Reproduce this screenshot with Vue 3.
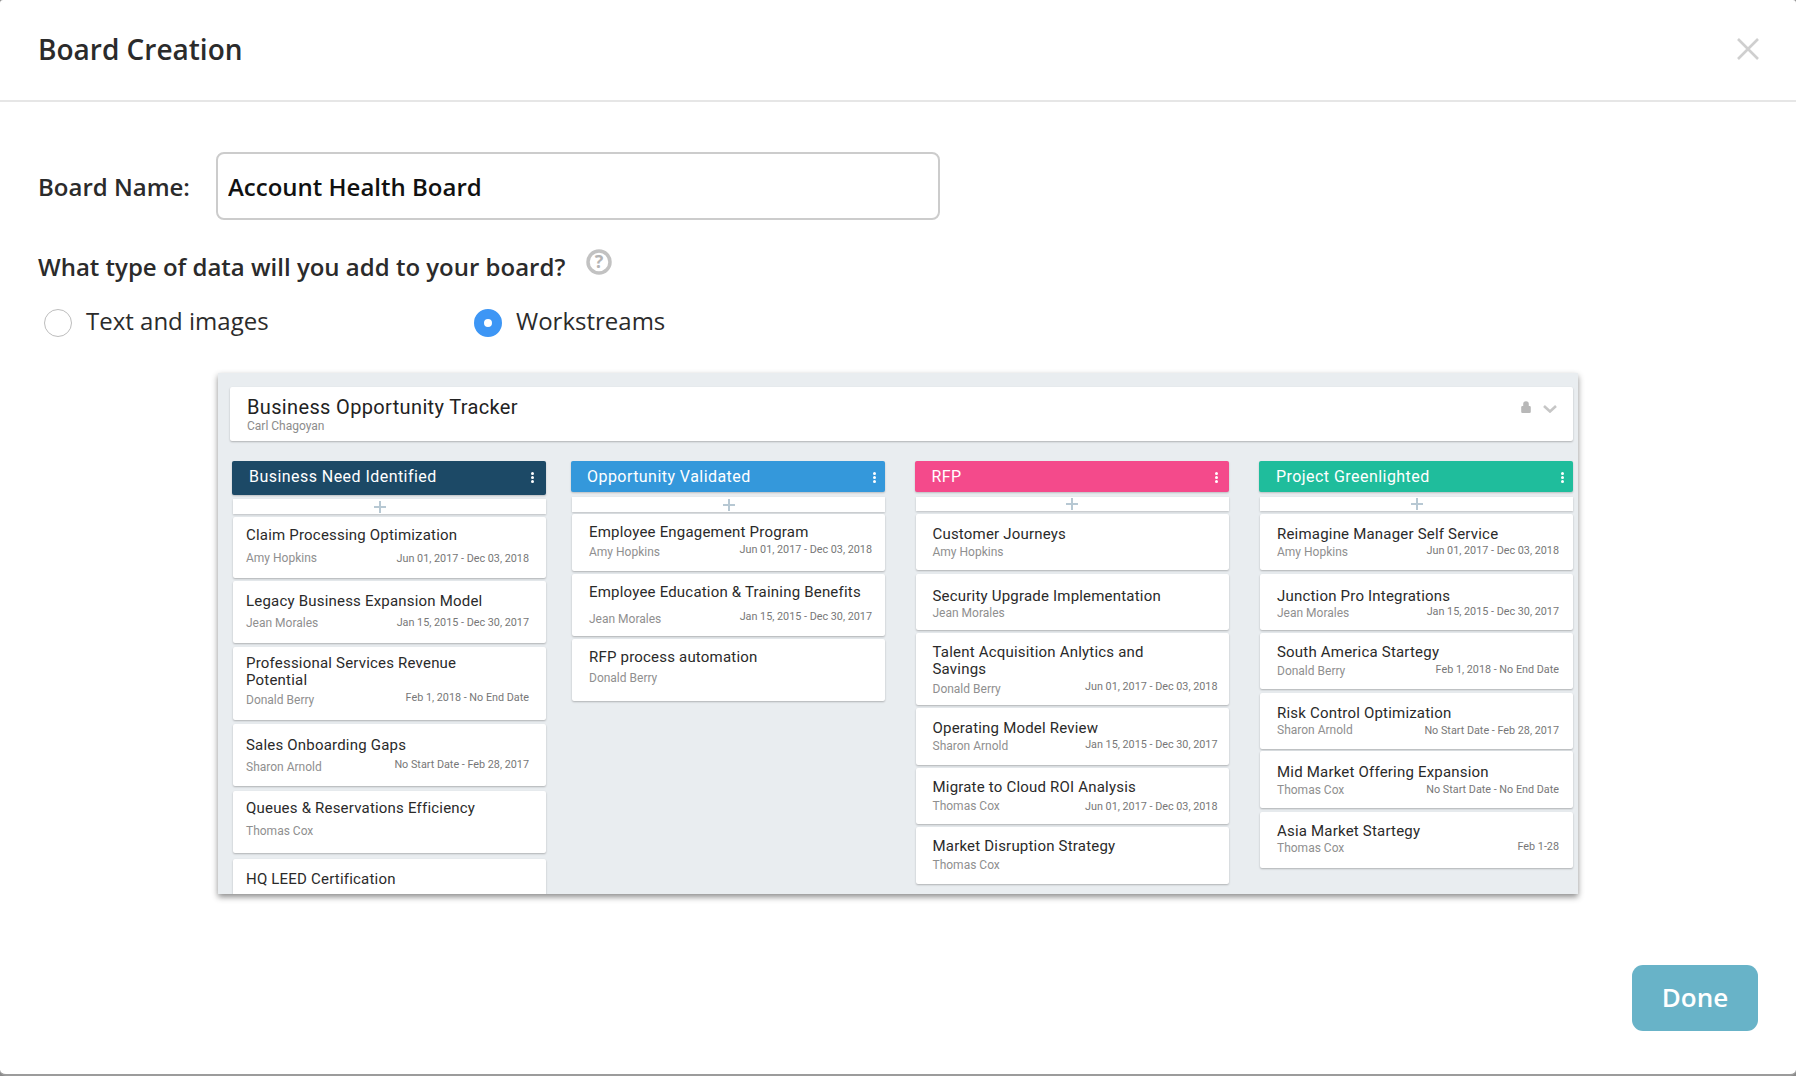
<template>
  <div class="modal">
    <header class="modal-head">
      <h1>Board Creation</h1>
      <svg class="close" width="24" height="24" viewBox="0 0 24 24">
        <path d="M2 2 L22 22 M22 2 L2 22" stroke="#cfcfcf" stroke-width="2.6" fill="none" />
      </svg>
    </header>

    <section class="form">
      <div class="name-row">
        <label for="board-name">Board Name:</label>
        <input id="board-name" type="text" value="Account Health Board" />
      </div>
      <div class="question">
        <span>What type of data will you add to your board?</span>
        <svg class="help" width="26" height="26" viewBox="0 0 26 26">
          <circle cx="13" cy="13" r="11" fill="#fff" stroke="#c2c2c2" stroke-width="3.5" />
          <text x="13" y="19" text-anchor="middle" class="help-q">?</text>
        </svg>
      </div>
      <div class="radios">
        <div class="radio-item first">
          <span class="radio"></span>
          <span>Text and images</span>
        </div>
        <div class="radio-item">
          <span class="radio on"></span>
          <span>Workstreams</span>
        </div>
      </div>
    </section>

    <div class="preview-wrap">
      <div class="preview">
        <div class="board-head">
          <div>
            <div class="board-title">Business Opportunity Tracker</div>
            <div class="board-owner">Carl Chagoyan</div>
          </div>
          <div class="board-icons">
            <svg width="10" height="12" viewBox="0 0 10 12">
              <path d="M2.2 5 V3 a2.8 2.8 0 0 1 5.6 0 V5 H8.6 a1.2 1.2 0 0 1 1.2 1.2 V10.8 a1.2 1.2 0 0 1 -1.2 1.2 H1.4 a1.2 1.2 0 0 1 -1.2 -1.2 V6.2 a1.2 1.2 0 0 1 1.2 -1.2 Z" fill="#b8b8b8" />
            </svg>
            <svg class="chevron" width="14" height="8" viewBox="0 0 14 8">
              <path d="M1 1 L7 6.5 L13 1" stroke="#c6c6c6" stroke-width="2.6" fill="none" />
            </svg>
          </div>
        </div>

        <div class="columns">
          <div v-for="col in columns" :key="col.name" class="column">
            <div class="col-head" :style="{ background: col.color, height: col.headH + 'px', paddingLeft: col.textX + 'px' }">
              <span>{{ col.name }}</span>
              <i class="dots" :style="{ right: col.dotsR + 'px' }"><b></b><b></b><b></b></i>
            </div>
            <div class="add" :style="{ marginTop: col.addGap + 'px', height: col.addH + 'px' }">
              <svg :style="{ marginLeft: col.plusShift + 'px' }" width="12" height="12" viewBox="0 0 12 12">
                <path d="M6 0 V12 M0 6 H12" stroke="#b7c8d3" stroke-width="2" />
              </svg>
            </div>
            <div
              v-for="card in col.cards"
              :key="card.key"
              class="card"
              :style="{ marginTop: card.gap + 'px', height: card.h + 'px', paddingTop: card.pt + 'px', paddingLeft: col.cardX + 'px', paddingRight: col.cardR + 'px' }"
            >
              <div v-for="line in card.lines" :key="line" class="card-title">{{ line }}</div>
              <div class="meta" :style="{ marginTop: card.mt + 'px' }">
                <span class="owner">{{ card.owner }}</span>
                <span v-if="card.date" class="date" :style="{ marginTop: card.dt + 'px' }">{{ card.date }}</span>
              </div>
            </div>
          </div>
        </div>
      </div>
    </div>

    <div class="foot">
      <button type="button" class="done">Done</button>
    </div>
  </div>
</template>

<script setup>
const TITLE_LH = 17
const META_LH = 14

// y positions are measured on the board picture: top, bottom, title centre, owner centre, date centre
function makeCards(addBottom, rows) {
  let prev = addBottom
  return rows.map((r) => {
    const [title, owner, date, top, bottom, titleY, ownerY, dateY] = r
    const lines = Array.isArray(title) ? title : [title]
    const card = {
      key: lines[0],
      lines,
      owner,
      date,
      gap: top - prev,
      h: bottom - top,
      pt: titleY - top - TITLE_LH / 2,
      mt: ownerY - (titleY + (lines.length - 1) * TITLE_LH) - TITLE_LH / 2 - META_LH / 2,
      dt: dateY ? dateY - ownerY : 0
    }
    prev = bottom
    return card
  })
}

const JUN = 'Jun 01, 2017 - Dec 03, 2018'
const JAN = 'Jan 15, 2015 - Dec 30, 2017'
const FEB = 'Feb 1, 2018 - No End Date'
const NOS = 'No Start Date - Feb 28, 2017'

const columns = [
  {
    name: 'Business Need Identified',
    color: '#1c4966',
    headH: 34,
    textX: 17,
    dotsR: 12,
    addGap: 4,
    addH: 15,
    plusShift: -20,
    cardX: 13,
    cardR: 17,
    cards: makeCards(514, [
      ['Claim Processing Optimization', 'Amy Hopkins', JUN, 517, 578, 535, 558, 559],
      ['Legacy Business Expansion Model', 'Jean Morales', JAN, 581, 643, 601, 623, 623],
      [['Professional Services Revenue', 'Potential'], 'Donald Berry', FEB, 647, 720, 663, 700, 698],
      ['Sales Onboarding Gaps', 'Sharon Arnold', NOS, 724, 786, 745, 767, 765],
      ['Queues & Reservations Efficiency', 'Thomas Cox', '', 791, 853, 808, 831, 0],
      ['HQ LEED Certification', '', '', 859, 920, 879, 900, 0]
    ])
  },
  {
    name: 'Opportunity Validated',
    color: '#3498db',
    headH: 31,
    textX: 16,
    dotsR: 9,
    addGap: 5,
    addH: 15,
    plusShift: 0,
    cardX: 17,
    cardR: 13,
    cards: makeCards(512, [
      ['Employee Engagement Program', 'Amy Hopkins', JUN, 514, 571, 532, 552, 550],
      ['Employee Education & Training Benefits', 'Jean Morales', JAN, 574, 636, 592, 619, 617],
      ['RFP process automation', 'Donald Berry', '', 639, 701, 657, 678, 0]
    ])
  },
  {
    name: 'RFP',
    color: '#f44a8b',
    headH: 31,
    textX: 17,
    dotsR: 11,
    addGap: 5,
    addH: 14,
    plusShift: 0,
    cardX: 17,
    cardR: 11,
    cards: makeCards(511, [
      ['Customer Journeys', 'Amy Hopkins', '', 514, 570, 534, 552, 0],
      ['Security Upgrade Implementation', 'Jean Morales', '', 574, 630, 596, 613, 0],
      [['Talent Acquisition Anlytics and', 'Savings'], 'Donald Berry', JUN, 633, 705, 652, 689, 687],
      ['Operating Model Review', 'Sharon Arnold', JAN, 708, 765, 728, 746, 745],
      ['Migrate to Cloud ROI Analysis', 'Thomas Cox', JUN, 768, 824, 787, 806, 807],
      ['Market Disruption Strategy', 'Thomas Cox', '', 827, 884, 846, 865, 0]
    ])
  },
  {
    name: 'Project Greenlighted',
    color: '#1fbd9c',
    headH: 31,
    textX: 17,
    dotsR: 9,
    addGap: 5,
    addH: 14,
    plusShift: 0,
    cardX: 17,
    cardR: 14,
    cards: makeCards(511, [
      ['Reimagine Manager Self Service', 'Amy Hopkins', JUN, 514, 570, 534, 552, 551],
      ['Junction Pro Integrations', 'Jean Morales', JAN, 574, 630, 596, 613, 612],
      ['South America Startegy', 'Donald Berry', FEB, 633, 689, 652, 671, 670],
      ['Risk Control Optimization', 'Sharon Arnold', NOS, 693, 749, 713, 730, 731],
      ['Mid Market Offering Expansion', 'Thomas Cox', 'No Start Date - No End Date', 751, 808, 772, 790, 790],
      ['Asia Market Startegy', 'Thomas Cox', 'Feb 1-28', 812, 868, 831, 848, 847]
    ])
  }
]
</script>

<style scoped>
.modal {
  width: 1796px;
  height: 1076px;
  box-sizing: border-box;
  background: #fff;
  border-bottom: 2px solid #9c9c9c;
  border-radius: 3px 3px 6px 6px;
  display: flex;
  flex-direction: column;
  font-family: "Open Sans", sans-serif;
  color: #2b2b2b;
  overflow: hidden;
}

.modal-head {
  height: 102px;
  box-sizing: border-box;
  padding: 0 36px 2px 38px;
  border-bottom: 2px solid #e6e6e6;
  display: flex;
  align-items: center;
  justify-content: space-between;
}

.modal-head h1 {
  margin: 0;
  font-size: 28px;
  font-weight: 600;
}

.form {
  padding: 50px 38px 0;
}

.name-row {
  display: flex;
  align-items: center;
}

.name-row label {
  width: 178px;
  font-size: 24px;
  font-weight: 600;
}

.name-row input {
  width: 724px;
  height: 68px;
  box-sizing: border-box;
  padding: 0 10px;
  border: 2px solid #cccccc;
  border-radius: 8px;
  font: 600 24px "Open Sans", sans-serif;
  color: #111;
  outline: none;
}

.question {
  margin-top: 26px;
  display: flex;
  align-items: center;
  height: 40px;
  font-size: 24px;
  font-weight: 600;
}

.help {
  margin-left: 21px;
  margin-top: -8px;
}

.help-q {
  font: 700 18px "Open Sans", sans-serif;
  fill: #b4b4b4;
}

.radios {
  margin-top: 18px;
  display: flex;
  font-size: 24px;
  padding-left: 6px;
}

.radio-item {
  display: flex;
  align-items: center;
  gap: 14px;
  height: 32px;
}

.radio-item.first {
  width: 430px;
}

.radio {
  width: 28px;
  height: 28px;
  box-sizing: border-box;
  margin-top: 6px;
  border: 1.5px solid #bdbdbd;
  border-radius: 50%;
  background: #fff;
}

.radio.on {
  border: 10px solid #3d96f5;
}

.preview-wrap {
  padding: 37px 0 0 218px;
}

.preview {
  width: 1360px;
  height: 521px;
  box-sizing: border-box;
  padding: 14px 5px 0 12px;
  background: #e9edf0;
  box-shadow: 0 3px 6px rgba(0, 0, 0, 0.45);
  overflow: hidden;
  font-family: Roboto, "Open Sans", sans-serif;
}

.board-head {
  height: 54px;
  box-sizing: border-box;
  padding: 9px 16px 0 17px;
  background: #fff;
  border-radius: 2px;
  box-shadow: 0 1px 2px rgba(0, 0, 0, 0.25);
  display: flex;
  justify-content: space-between;
}

.board-title {
  font-size: 20px;
  line-height: 22px;
  color: #222;
  letter-spacing: 0.35px;
}

.board-owner {
  font-size: 12px;
  line-height: 15px;
  color: #8c8c8c;
  margin-top: 1px;
}

.board-icons {
  display: flex;
  align-items: flex-start;
  gap: 12px;
  padding-top: 5px;
}

.chevron {
  margin-top: 4px;
}

.columns {
  margin-top: 20px;
  display: flex;
  align-items: flex-start;
}

.column {
  width: 314px;
  flex: none;
  margin-left: 2px;
  margin-right: 25px;
}

.column:nth-child(2) {
  margin-right: 29.5px;
  margin-left: 0;
}

.column:nth-child(3) {
  margin-left: 0;
  margin-right: 30.5px;
}

.column:nth-child(4) {
  margin: 0;
}

.col-head {
  position: relative;
  display: flex;
  align-items: center;
  color: #fff;
  font-size: 16px;
  letter-spacing: 0.45px;
  border-radius: 2px;
  box-shadow: 0 1px 2px rgba(0, 0, 0, 0.2);
}

.column:first-child .col-head span {
  margin-bottom: 3px;
}

.dots {
  position: absolute;
  top: 11px;
  display: flex;
  flex-direction: column;
  gap: 1px;
}

.dots b {
  width: 3px;
  height: 3px;
  border-radius: 50%;
  background: #fff;
}

.add {
  background: #fff;
  margin-left: 1px;
  display: flex;
  align-items: center;
  justify-content: center;
  box-shadow: 0 1px 2px rgba(0, 0, 0, 0.2);
}

.card {
  box-sizing: border-box;
  background: #fff;
  margin-left: 1px;
  box-shadow: 0 1px 2px rgba(0, 0, 0, 0.25);
  border-radius: 2px;
}

.card-title {
  font-size: 15px;
  line-height: 17px;
  color: #2a2a2a;
  letter-spacing: 0.2px;
}

.meta {
  display: flex;
  justify-content: space-between;
  align-items: flex-start;
  font-size: 12px;
  line-height: 14px;
}

.owner {
  color: #8f8f8f;
}

.date {
  color: #777;
  font-size: 10.8px;
}

.foot {
  flex: 1;
  display: flex;
  justify-content: flex-end;
  align-items: flex-start;
  padding: 71px 38px 0 0;
}

.done {
  width: 126px;
  height: 66px;
  padding-bottom: 3px;
  border: none;
  border-radius: 11px;
  background: #68b3c8;
  color: #fff;
  font: 600 26px "Open Sans", sans-serif;
}
</style>

<style>
html,
body {
  margin: 0;
  background: #8a8a8a;
}
</style>
